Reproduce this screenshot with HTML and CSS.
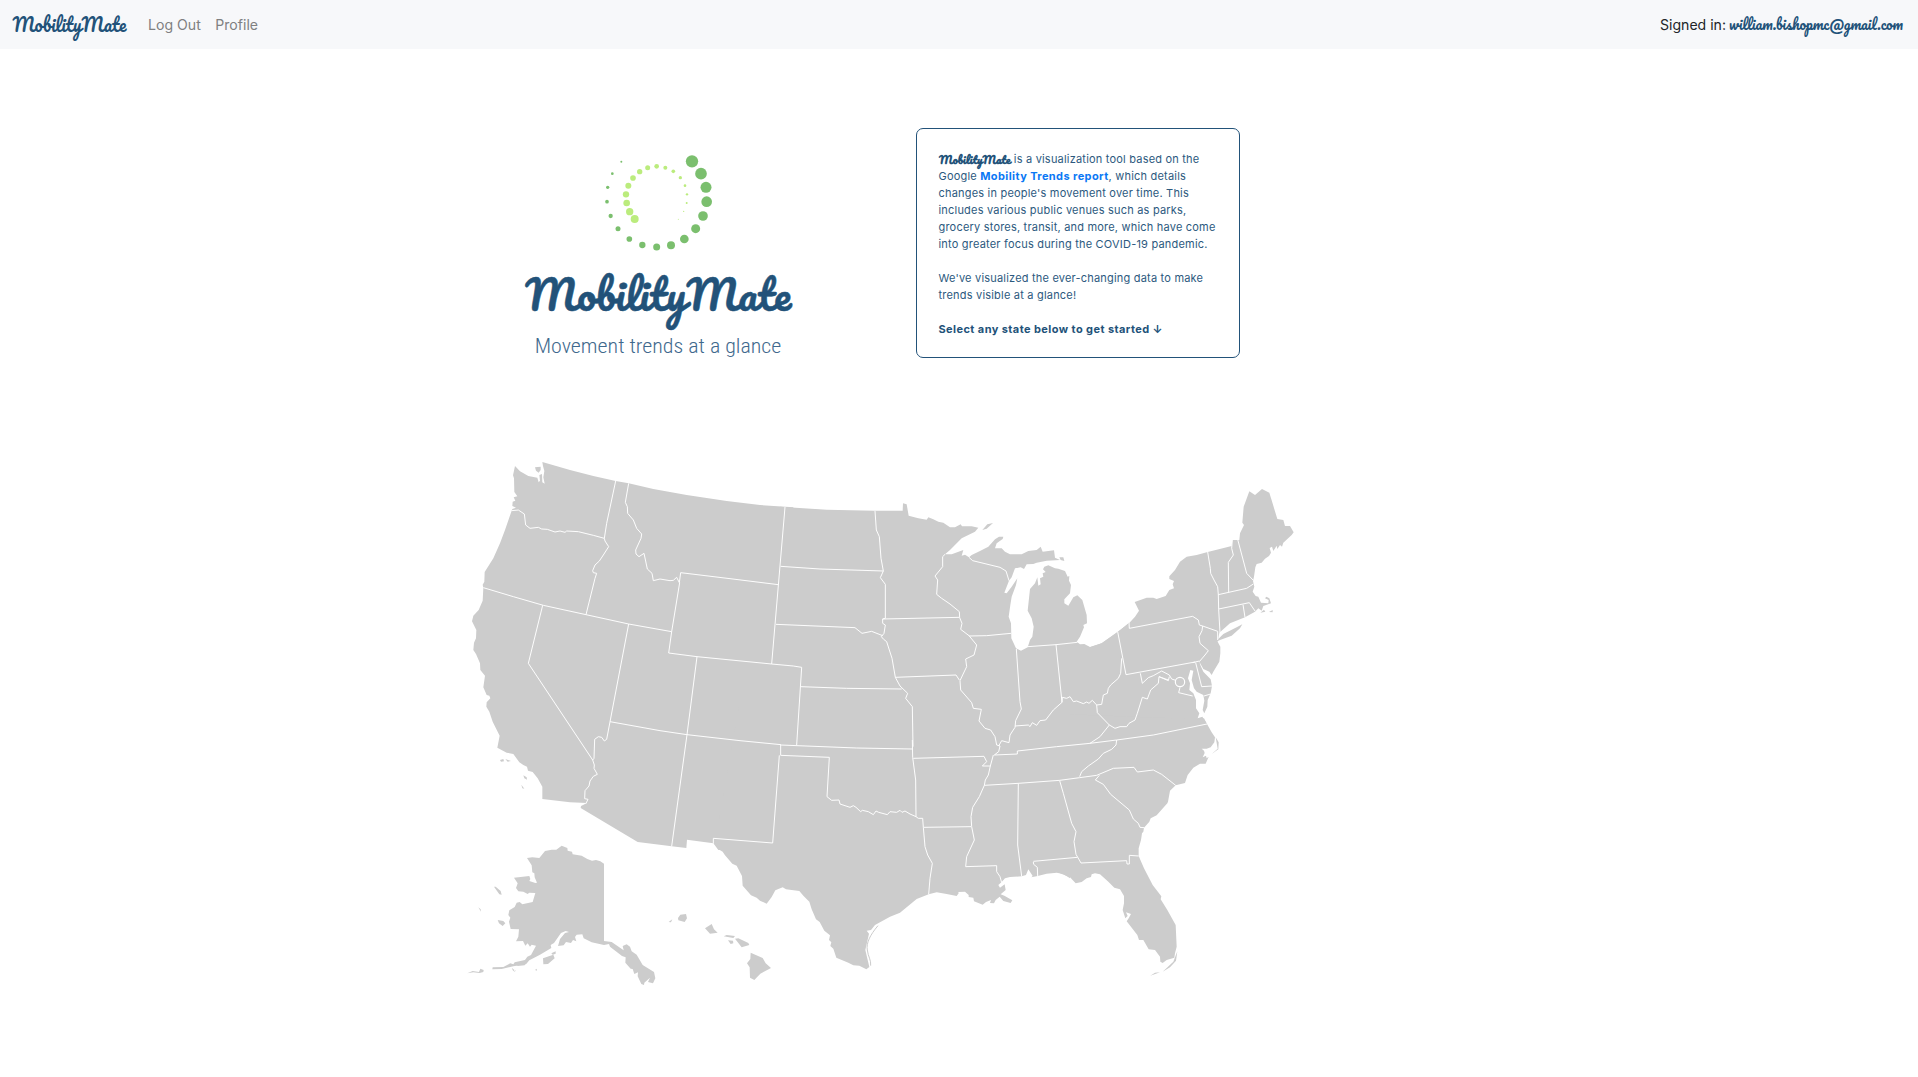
FILE: index.html
```html
<!DOCTYPE html>
<html lang="en">
<head>
<meta charset="utf-8">
<title>MobilityMate</title>
<link rel="stylesheet" href="styles.css">
</head>
<body>
<nav class="navbar">
  <a class="brand"><svg class="brand-mark" viewBox="0 0 118 48"><text class="script" x="1.5" y="31.3" font-size="18" textLength="114" lengthAdjust="spacingAndGlyphs">MobilityMate</text></svg></a>
  <a class="nav-link">Log Out</a>
  <a class="nav-link">Profile</a>
  <div class="signed-in">Signed in: <svg class="account" viewBox="0 0 176 48"><text class="script" x="0" y="29.3" font-size="14.4" textLength="174" lengthAdjust="spacingAndGlyphs">william.bishopmc@gmail.com</text></svg></div>
</nav>
<main class="page">
  <section class="intro">
    <svg class="logo" viewBox="0 0 960 690">
      <g fill="#7bbf6e">
        <circle cx="576" cy="64" r="18.5"/><circle cx="603" cy="101" r="17.5"/><circle cx="618" cy="142" r="16.5"/><circle cx="620" cy="185" r="16"/><circle cx="609" cy="228" r="14.5"/><circle cx="587" cy="266" r="13.5"/><circle cx="553" cy="297" r="13"/><circle cx="513" cy="316" r="12"/><circle cx="470" cy="321" r="10.5"/><circle cx="427" cy="315" r="9.5"/><circle cx="388" cy="297" r="8.5"/><circle cx="354" cy="266" r="7.5"/><circle cx="332" cy="228" r="6.5"/><circle cx="321" cy="185" r="5.5"/><circle cx="323" cy="142" r="5"/><circle cx="337" cy="101" r="4"/><circle cx="364" cy="65" r="3"/>
      </g>
      <g fill="#bbec7d">
        <circle cx="404" cy="237" r="12"/><circle cx="389" cy="215" r="11"/><circle cx="380" cy="189" r="10"/><circle cx="378" cy="163" r="9.5"/><circle cx="385" cy="137" r="9"/><circle cx="399" cy="114" r="8.5"/><circle cx="419" cy="95" r="8"/><circle cx="443" cy="83" r="7.5"/><circle cx="470" cy="79" r="7"/><circle cx="496" cy="83" r="6"/><circle cx="520" cy="94" r="5.5"/><circle cx="541" cy="113" r="5"/><circle cx="555" cy="137" r="4"/><circle cx="561" cy="163" r="3.5"/><circle cx="560" cy="189" r="3"/><circle cx="551" cy="214" r="2"/><circle cx="535" cy="238" r="1.5"/>
      </g>
      <text class="script logo-name" x="76" y="512" font-size="122" textLength="798" lengthAdjust="spacingAndGlyphs">MobilityMate</text>
      <text class="tagline" x="104" y="638" font-size="62" textLength="740" lengthAdjust="spacingAndGlyphs">Movement trends at a glance</text>
    </svg>
    <div class="card">
      <p><svg class="inline-mark" viewBox="0 0 72 17"><text class="script heavy" x="0" y="12.6" font-size="11" textLength="71.5" lengthAdjust="spacingAndGlyphs">MobilityMate</text></svg> is a visualization tool based on the<br>Google <a class="report">Mobility Trends report</a>, which details<br>changes in people's movement over time. This<br>includes various public venues such as parks,<br>grocery stores, transit, and more, which have come<br>into greater focus during the COVID-19 pandemic.</p>
      <p>We've visualized the ever-changing data to make<br>trends visible at a glance!</p>
      <p class="prompt">Select any state below to get started ↓</p>
    </div>
  </section>
  <svg class="map" viewBox="0 0 2550 1650">
    <g class="land">
      <!-- West -->
      <path d="M247,36 330,60 400,78 467,93 506,100 580,117 680,135 800,153 900,165 1000,172V1200H775L760,1180 681,1169 679,1194 635,1189 533,1176 362,1074 363,1068 381,1059 330,1057 247,1047 247,1010 233,985 218,966 204,962 201,950 190,945 178,937 160,912 140,908 112,893 119,857 98,815 88,785 79,770 80,757 91,745 88,737 80,735 70,712 75,677 61,660 60,640 48,612 40,600 42,578 48,565 49,540 36,514 40,497 56,480 68,452 70,413 68,404 73,395 74,366 100,325 120,280 135,240 155,182 157,177 168,173 157,168 158,155 166,152 161,142 172,139 163,126 162,85 159,76 165,48 180,64 205,78 232,83 236,97 240,92 238,75 246,72 247,97 254,101 250,82 253,63 249,48ZM225,52 242,50 242,60 236,68 228,62ZM120,930 130,927 132,934 123,935ZM136,927 153,933 143,935ZM190,976 200,982 201,989 193,985ZM184,1004 193,1016 187,1015Z"/>
      <!-- Great Lakes and northern plains -->
      <path transform="translate(1320 120)" d="M-360,50 -220,59 -75,62 8,62 9,40 20,43 26,77 55,85 80,89 85,82 100,88 115,95 130,98 150,112 165,112 182,103 186,109 215,109 235,113 225,125 185,145 150,180 135,193 155,193 190,180 185,197 195,194 207,202 215,195 240,183 265,170 285,148 297,140 310,140 308,147 290,160 285,175 305,175 315,185 330,193 365,193 385,183 410,180 422,170 428,185 462,181 465,203 480,210 440,212 410,218 400,222 380,223 372,237 362,232 345,235 335,262 327,272 313,308 320,310 335,290 352,265 348,285 335,320 331,345 326,380 333,400 334,445 348,475 363,482 383,472 390,450 397,440 401,410 395,385 383,362 387,325 390,297 405,280 412,262 415,287 422,283 420,265 430,260 428,250 437,246 429,238 433,230 445,226 465,235 475,236 495,243 503,260 508,258 507,272 513,285 510,310 493,328 493,340 505,347 520,322 532,316 547,330 560,375 561,400 550,405 552,412 540,440 530,455 540,463 553,462 570,471 605,460 655,425 687,398V700H-360ZM247,120 262,103 279,99 260,116ZM478,202 490,202 493,213 482,210Z"/>
      <!-- Northeast -->
      <path transform="translate(1860 90)" d="M-60,500 0,495 30,502 65,490 113,455 147,430 165,410 177,392 170,378 164,366 200,353 220,353 230,357 257,348 268,330 282,325 278,313 282,303 268,297 268,289 285,270 300,245 320,230 350,225 383,216 455,198 457,180 478,180 480,160 492,135 487,128 491,80 508,34 525,45 546,27 568,38 592,117 610,120 615,138 630,138 641,157 635,165 610,188 606,200 600,195 592,207 590,197 580,213 576,200 569,204 573,218 567,228 555,236 545,248 530,252 526,262 522,290 519,303 523,320 518,335 527,348 535,350 543,368 565,370 566,360 555,355 559,350 568,355 573,370 550,378 545,392 535,385 525,395 495,412 450,430 418,458 413,485 421,500 421,520 418,545 400,575 395,585 388,575 370,567 358,545 361,555 370,575 392,598 396,618 392,640 383,660 382,680 373,700 368,690 373,662 370,645 350,635 342,625 335,600 340,572 331,570 324,595 330,610 328,630 340,640 348,660 348,685 358,700 353,715 367,710 381,732 300,850 -60,850ZM405,487 430,462 470,442 487,433 480,445 455,467 420,480ZM541,398 552,389 556,395ZM567,396 578,390 578,397Z"/>
      <!-- Southeast -->
      <path transform="translate(1800 630)" d="M-300,150 414,178 432,175 441,192 455,217 465,232 463,247 452,262 440,266 425,266 432,272 434,279 428,292 438,287 440,295 446,290 437,311 420,311 400,323 383,345 375,369 347,376 330,392 324,425 322,430 290,466 272,475 268,485 252,503 250,515 246,520 243,540 236,565 236,588 252,625 278,675 304,709 302,718 322,750 347,795 350,860 345,880 343,893 320,900 308,909 301,905 300,890 285,870 266,868 250,840 237,840 232,825 200,784 206,775 213,762 198,757 203,768 196,775 188,750 192,730 192,708 180,688 163,683 145,665 120,643 105,640 95,643 93,651 80,655 65,666 47,670 30,652 0,640 -300,500ZM271,947 285,938 300,937ZM467,232 476,247 475,268 455,282 473,266ZM308,935 340,905 352,874 348,902 330,922Z"/>
      <!-- Texas and the Gulf -->
      <path transform="translate(690 810)" d="M150,-60 75,371 88,389 98,395 105,406 127,431 140,437 156,468 158,497 183,526 200,533 210,542 230,551 245,531 256,511 278,502 288,508 328,513 340,527 358,545 365,568 378,598 389,606 403,632 420,646 417,660 424,667 421,678 430,686 439,713 475,728 490,736 508,737 529,748 538,741 526,690 537,641 530,632 543,630 555,615 600,590 630,578 680,537 716,523 740,517 770,522 800,528 806,520 805,516 825,515 836,525 836,531 850,533 852,544 878,554 888,546 903,540 900,549 912,550 917,540 929,530 940,543 962,549 967,541 943,527 932,523 947,510 944,493 930,503 925,495 935,486 945,475 960,471 995,469 1008,465 1015,448 1028,468 1024,472 1043,468 1070,461 1100,458 1120,462 1140,475V-60ZM45,625 65,612 72,628 83,638 60,641ZM101,649 110,645 135,648 130,654ZM114,661 129,662 130,670 122,672ZM135,656 145,655 175,669 178,675 155,682ZM182,698 218,714 227,730 243,744 211,761 193,780 180,773 179,742 171,730 181,717Z"/>
      <!-- Alaska, Kauai and Niihau -->
      <path transform="translate(0 1140)" d="M201,84 217,82 238,84 255,63 275,59 289,59 305,47 322,54 323,62 336,65 338,73 365,77 382,87 396,92 408,90 421,94 432,101V333L455,336 491,361 488,348 500,343 510,350 515,364 530,374 548,405 582,426 586,445 579,460 564,456 570,443 553,458 552,465 544,462 533,439 534,427 523,432 518,417 512,416 496,398 497,382 486,378 450,350 447,342 432,345 395,337 371,325 367,313 350,314 345,321 349,334 339,330 333,339 318,336 311,346 294,348 300,327 315,309 327,306 317,303 303,309 282,339 272,345 274,354 240,374 208,391 198,403 160,409 125,417 97,418 98,412 130,411 151,400 160,403 164,397 195,390 202,380 213,375 228,347 215,344 210,350 203,340 196,347 189,333 168,334 175,320 177,298 152,297 147,275 151,263 145,255 148,241 164,231 170,218 179,216 187,223 218,216 226,189 208,188 203,192 190,185 175,184 168,174 173,160 162,143 208,138 211,147 208,153 226,159 231,158 224,142 223,130 217,127 215,106ZM102,170 107,170 122,183 125,194 118,193ZM55,232 62,238 63,245ZM113,270 130,273 136,280 128,288 117,280ZM249,385 280,374 284,385 264,402 250,403ZM274,370 287,364 287,371 278,374ZM22,430 38,423 57,426 61,416 71,420 70,426 59,429 40,427ZM155,413 163,420 160,424ZM225,420 230,416 231,422ZM162,424 167,420 165,425ZM170,402 197,400 194,406 173,408ZM626,276 637,268 633,277ZM654,264 661,254 678,252 681,265 674,276 655,271Z"/>
    </g>
    <g class="coast-line">
      <path d="M1254,1427C1230,1455 1218,1480 1222,1500 1224,1520 1234,1530 1232,1547"/>
    </g>
    <g class="borders">
      <path d="M155,182 175,180 193,192 197,225 210,235 235,232 245,237 262,238 285,246 300,243 315,247 320,243 355,245 400,256 433,265M467,93 440,220 433,265 435,273 446,290 430,315 418,333 405,345 398,362 400,368 410,370 405,385 378,494M70,413 160,440 250,466 378,494 506,522 635,545M248,466 205,640 398,930 403,945 402,955 412,973 400,979 390,993 387,1008 375,1022 374,1046 384,1048 378,1060M506,522 440,868 433,873 425,862 415,860 404,868 402,925 398,930M658,398 662,368 810,386 955,404M659,398 635,545 626,609 711,620 935,642 1000,648M506,100 496,157 502,170 503,190 520,210 530,235 545,252 543,265 527,300 528,312 537,320 552,310 562,357 576,370 580,392 600,387 630,392 640,391 650,382 658,398M975,171 935,642M711,620 681,854 635,1189M450,815 600,842 681,854 840,872 963,884"/>
      <path transform="translate(900 120)" d="M62,229 180,237 370,243M345,63 349,120 358,140 363,205 370,243 361,263 376,283 376,385M48,403 285,413 306,430 335,424 368,437M368,387 598,382M376,385 368,387 368,400 376,405 372,430 364,440 371,448 380,455 396,505 406,562 420,588 443,610 437,625 457,650 459,770M122,590 260,595 425,597M100,528 125,532 110,765M406,562 588,555 598,570"/>
      <path transform="translate(1320 120)" d="M135,193 128,200 128,230 105,258 113,270 110,313 125,325 150,342 178,365 179,383 186,400 182,418 207,437 230,465 222,495 197,507 200,530 188,555 180,572 182,600 215,638 220,655 244,658 237,693 255,715 272,720 285,740 290,765 300,768 296,785 283,795M207,438 260,437 333,430M207,202 218,212 300,232 318,243 327,272M349,477 360,635 364,657 347,692 345,712 330,735 327,758 305,752 296,768M345,708 385,705 390,710 397,698 410,706 420,692 437,690 460,660 486,637 487,622 500,625 510,620 520,635 530,633 550,641 560,636 567,640 577,631 590,645 605,643 610,615 622,610 625,595 632,585 655,565 662,550 665,505M468,464 486,637M383,470 468,464 532,457M653,425 678,554 885,516M687,398 688,415 878,379M590,645 592,668 628,705 600,740 570,760M628,705 645,715 660,710 680,710 687,700 705,690 712,670 727,622 742,627 752,600 775,580 777,560 805,570M283,795 352,792 352,783 470,770 570,760 650,750 760,735 921,702"/>
      <path transform="translate(1860 90)" d="M383,216 391,265 392,280 402,300 413,320 415,345 416,388 420,458M457,180 455,205 460,225 445,247 446,337M473,178 500,280 519,300M415,344 500,325 520,312M416,387 508,368 525,393M489,374 495,412M338,409 355,420 358,435 368,438 413,454V480M368,438 366,452 357,470 360,490 385,512 375,525 358,545M338,548 358,543M347,548 365,620 396,618M372,648 392,642M181,580 187,610 205,593 220,587 245,573 268,585 275,597 290,602M237,590 265,602 268,590M300,622 296,638 338,648"/>
      <path transform="translate(1800 630)" d="M170,240 168,255 155,268 130,280 115,297 85,318 65,335 59,350M59,353 110,346 160,325 222,322 232,336 280,330 305,343 347,376M118,346 106,360 130,373 152,403 208,450 220,477 235,490 240,502 252,503M-1,362 10,400 35,490 48,515 42,545 48,583 63,609 200,602 201,612 208,612 208,586 236,588M52,592 -80,604"/>
      <path transform="translate(690 810)" d="M272,75 500,84 667,87M272,75 272,106 418,112 411,230 425,241 447,240 450,252 480,262 490,257 498,262 512,275 517,271 535,275 550,284 558,273 566,277 592,284 600,275 620,277 630,271 636,277 645,273 660,282 678,290 685,295 698,295 700,322 705,380 713,405 727,430 720,475 716,523M268,106 248,369 70,355 70,371M667,60 668,112 677,180 678,290M670,115 882,109 890,125 877,138 901,138M910,105 901,138 895,165 886,180 883,196 868,230 848,262 843,290 845,320 853,360 830,410 827,440 920,437 920,455 930,470 935,488M701,322 843,320M883,196 985,190 1109,181 1169,173M985,190 983,375 995,469M1030,426 1031,433 1042,442 1043,468"/>
      <circle class="district" cx="2160" cy="696" r="14"/>
    </g>
  </svg>
</main>
</body>
</html>
```
FILE: styles.css
```css
* { box-sizing: border-box; }

body {
  margin: 0;
  background: #fff;
  color: #212529;
  font-family: Inter, "Noto Sans", sans-serif;
  overflow: hidden;
}

.navbar {
  display: flex;
  align-items: center;
  height: 49px;
  padding: 0 13px 0 11px;
  background: #f7f8fa;
  font-size: 14.1px;
}

.brand { display: flex; margin-right: 19px; }
.brand-mark { width: 118px; height: 48px; overflow: visible; }
.nav-link { margin-right: 14.5px; color: #7f8081; }
.signed-in { display: flex; align-items: center; gap: 3px; margin-left: auto; }
.account { width: 176px; height: 48px; overflow: visible; }

.script {
  font-family: Pacifico, "Liberation Serif", cursive;
  fill: #225279;
}

.logo-name { stroke: #225279; stroke-width: 1.5; }
.heavy { font-weight: 700; }

.tagline {
  font-family: "Roboto Condensed", Roboto, sans-serif;
  font-weight: 300;
  fill: #3f698d;
}

.page { padding: 79px 460px 0; }

.intro {
  display: flex;
  align-items: flex-start;
  height: 322px;
  padding-left: 40px;
}

.logo { width: 320px; height: 230px; margin: 12px 96px 0 0; overflow: visible; }

.card {
  width: 324px;
  height: 230px;
  padding: 22px 20px 19px 21.5px;
  border: 1px solid #225279;
  border-radius: 7px;
  color: #2c597e;
  font-size: 11px;
  line-height: 17px;
  letter-spacing: .2px;
  white-space: nowrap;
}

.card p { margin: 0 0 17px; }
.inline-mark { width: 72px; height: 17px; vertical-align: top; overflow: visible; }
.report { color: #0a78f5; font-weight: 700; letter-spacing: .4px; }
.card .prompt { margin: 0; color: #225279; font-weight: 700; letter-spacing: .42px; }

.map { display: block; width: 850px; height: 550px; }
.land { fill: #ccc; }
.coast-line { fill: none; stroke: #ccc; stroke-width: 3; }
.borders { fill: none; stroke: #fff; stroke-width: 2.9; stroke-linejoin: round; }
.district { fill: #ccc; stroke-width: 3.5; }
```
